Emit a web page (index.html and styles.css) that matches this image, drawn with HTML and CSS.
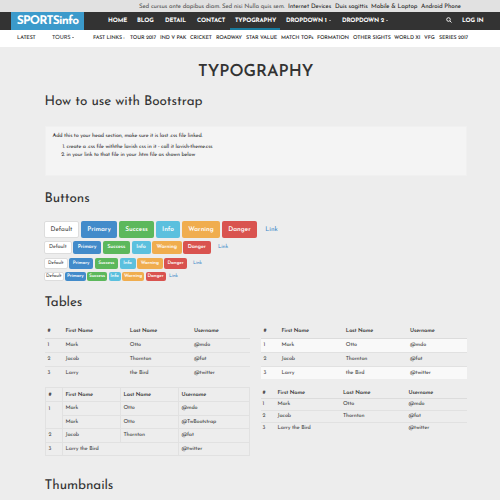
FILE: index.html
```
<!DOCTYPE html>
<html lang="en">
<head>
<meta charset="utf-8">
<title>SPORTSinfo - Typography</title>
<link rel="stylesheet" href="styles.css">
</head>
<body>
<div class="topbar"><span class="tagline">Sed cursus ante dapibus diam. Sed nisi Nulla quis sem.</span><a>Internet Devices</a><a>Duis sagittis</a><a>Mobile &amp; Laptop</a><a>Android Phone</a></div>
<nav class="navbar">
  <a class="brand">SPORTSinfo</a>
  <div class="menu"><a>HOME</a><a>BLOG</a><a>DETAIL</a><a>CONTACT</a><a class="active">TYPOGRAPHY</a><a>DROPDOWN 1<i class="caret"></i></a><a>DROPDOWN 2<i class="caret"></i></a><a><svg class="search" viewBox="0 0 12 12"><circle cx="5" cy="5" r="3.6"/><path d="M8 8l3 3"/></svg></a><a>LOG IN</a></div>
</nav>
<div class="subnav"><b>LATEST</b><span class="tours">TOURS<i class="caret"></i></span><b>FAST LINKS :</b><a>TOUR 2017</a><a>IND V PAK</a><a>CRICKET</a><a>ROADWAY</a><a>STAR VALUE</a><a>MATCH TOPs</a><a>FORMATION</a><a>OTHER SIGHTS</a><a>WORLD XI</a><a>VFG</a><a>SERIES 2017</a></div>
<main>
  <h1>TYPOGRAPHY</h1>
  <h2 class="how">How to use with Bootstrap</h2>
  <section class="well">
    <p>Add this to your head section, make sure it is last .css file linked.</p>
    <ol><li>create a .css file withthe lavish css in it - call it lavish-theme.css</li><li>in your link to that file in your .htm file as shown below</li></ol>
  </section>
  <h2 class="buttons-title">Buttons</h2>
  <div class="buttons lg"><a class="default">Default</a><a class="primary">Primary</a><a class="success">Success</a><a class="info">Info</a><a class="warning">Warning</a><a class="danger">Danger</a><a class="link">Link</a></div>
  <div class="buttons md"><a class="default">Default</a><a class="primary">Primary</a><a class="success">Success</a><a class="info">Info</a><a class="warning">Warning</a><a class="danger">Danger</a><a class="link">Link</a></div>
  <div class="buttons sm"><a class="default">Default</a><a class="primary">Primary</a><a class="success">Success</a><a class="info">Info</a><a class="warning">Warning</a><a class="danger">Danger</a><a class="link">Link</a></div>
  <div class="buttons xs"><a class="default">Default</a><a class="primary">Primary</a><a class="success">Success</a><a class="info">Info</a><a class="warning">Warning</a><a class="danger">Danger</a><a class="link">Link</a></div>
  <h2 class="tables-title">Tables</h2>
  <div class="tables">
    <div class="column">
      <table class="plain">
        <colgroup><col class="c1"><col class="c2"><col class="c3"><col></colgroup>
        <thead><tr><th>#</th><th>First Name</th><th>Last Name</th><th>Username</th></tr></thead>
        <tbody><tr><td>1</td><td>Mark</td><td>Otto</td><td>@mdo</td></tr><tr><td>2</td><td>Jacob</td><td>Thornton</td><td>@fat</td></tr><tr><td>3</td><td>Larry</td><td>the Bird</td><td>@twitter</td></tr></tbody>
      </table>
      <table class="bordered">
        <colgroup><col class="c1"><col class="c2"><col class="c3"><col></colgroup>
        <thead><tr><th>#</th><th>First Name</th><th>Last Name</th><th>Username</th></tr></thead>
        <tbody><tr><td rowspan="2" class="top">1</td><td>Mark</td><td>Otto</td><td>@mdo</td></tr><tr><td>Mark</td><td>Otto</td><td>@TwBootstrap</td></tr><tr><td>2</td><td>Jacob</td><td>Thornton</td><td>@fat</td></tr><tr><td>3</td><td colspan="2">Larry the Bird</td><td>@twitter</td></tr></tbody>
      </table>
    </div>
    <div class="column">
      <table class="plain striped">
        <colgroup><col class="c1"><col class="c2"><col class="c3"><col></colgroup>
        <thead><tr><th>#</th><th>First Name</th><th>Last Name</th><th>Username</th></tr></thead>
        <tbody><tr><td>1</td><td>Mark</td><td>Otto</td><td>@mdo</td></tr><tr><td>2</td><td>Jacob</td><td>Thornton</td><td>@fat</td></tr><tr><td>3</td><td>Larry</td><td>the Bird</td><td>@twitter</td></tr></tbody>
      </table>
      <table class="condensed">
        <colgroup><col class="c1"><col class="c2"><col class="c3"><col></colgroup>
        <thead><tr><th>#</th><th>First Name</th><th>Last Name</th><th>Username</th></tr></thead>
        <tbody><tr><td>1</td><td>Mark</td><td>Otto</td><td>@mdo</td></tr><tr><td>2</td><td>Jacob</td><td>Thornton</td><td>@fat</td></tr><tr><td>3</td><td colspan="2">Larry the Bird</td><td>@twitter</td></tr></tbody>
      </table>
    </div>
  </div>
  <h2 class="thumbs-title">Thumbnails</h2>
</main>
</body>
</html>
```
FILE: styles.css
```
* { box-sizing: border-box; }
body { margin: 0; width: 500px; height: 500px; overflow: hidden; background: #ededed; color: #333; font-family: "Josefin Sans", Lato, sans-serif; font-size: 5.5px; letter-spacing: -.12px; text-rendering: geometricPrecision; }
a, span, b, th, td { white-space: nowrap; }
.topbar { display: grid; grid-template-columns: 149px 47px 36px 50px 45px; padding-left: 139px; height: 12px; line-height: 13px; background: #e1e1e1; font-size: 6.2px; letter-spacing: -.11px; color: #222; }
.tagline { color: #555; letter-spacing: -.13px; }
.navbar { display: flex; height: 18px; padding-left: 11px; background: #333; color: #fff; }
.brand { width: 73px; background: #3b9acb; font-size: 12px; font-weight: 700; letter-spacing: -.75px; line-height: 19px; text-align: center; }
.menu { display: grid; grid-template-columns: 29px 28px 32px 38px 51px 56px 104px 16px 30px; padding-left: 24px; font-size: 6px; font-weight: 700; letter-spacing: -.15px; line-height: 18px; }
.menu .active { margin-left: -5px; padding-left: 5px; width: 50px; box-shadow: inset 0 -2px #197a9c; }
.caret { display: inline-block; margin-left: 2px; border: 1.5px solid transparent; border-top-color: currentColor; border-bottom: 0; vertical-align: 1px; }
.search { width: 6px; height: 6px; vertical-align: -1px; fill: none; stroke: #fff; stroke-width: 1.8; }
.subnav { display: grid; grid-template-columns: 35px 41px 37px 30px 30px 26px 30px 35px 36px 36px 41px 30px 15px 33px; height: 17px; padding-left: 17px; line-height: 18px; background: #fff; font-size: 5.3px; font-weight: 600; letter-spacing: -.15px; }
.subnav b { font-weight: 600; }
.tours { font-weight: 400; font-size: 5.7px; }
main { padding: 0 33px 0 44.5px; }
h1, h2, p, ol { margin: 0; }
h1 { height: 45px; padding-top: 16px; line-height: 20px; font-size: 16.5px; font-weight: 600; letter-spacing: 0; text-align: center; }
h2 { font-size: 13.5px; letter-spacing: -.08px; font-weight: 400; line-height: 22px; }
.how { height: 34px; }
.well { height: 50px; padding: 6px 7px; background: #f4f4f4; border: 1px solid #f0f0f0; line-height: 7.9px; }
.well ol { margin-top: 3px; padding-left: 14px; }
.buttons-title { height: 45px; padding-top: 13px; }
.buttons { display: flex; margin-left: -.5px; color: #fff; font-weight: 600; letter-spacing: 0; }
.buttons a { display: flex; align-items: center; justify-content: center; border-radius: 2px; }
.buttons .default { background: #fff; color: #444; font-weight: 400; border: 1px solid #ddd; }
.primary { background: #428bca; }
.success { background: #5cb85c; }
.info { background: #5bc0de; }
.warning { background: #f0ad4e; }
.danger { background: #d9534f; }
.buttons .link { color: #428bca; font-weight: 400; }
.lg { height: 17px; gap: 2px; font-size: 6.5px; margin-bottom: 3px; }
.lg .default { width: 35px; } .lg .primary { width: 36px; } .lg .success { width: 35px; } .lg .info { width: 24px; } .lg .warning { width: 38px; } .lg .danger { width: 35px; } .lg .link { width: 25px; }
.buttons.md { height: 13px; gap: 1.5px; font-size: 5.4px; letter-spacing: -.1px; margin-bottom: 3.5px; }
.md .default { width: 27.5px; } .md .primary { width: 28px; } .md .success { width: 27.5px; } .md .info { width: 19px; } .md .warning { width: 29.5px; } .md .danger { width: 27.5px; } .md .link { width: 22px; }
.buttons.sm { height: 11.5px; gap: 1.5px; font-size: 4.8px; letter-spacing: -.1px; margin-bottom: 3px; }
.sm .default { width: 23.5px; } .sm .primary { width: 24px; } .sm .success { width: 23.5px; } .sm .info { width: 16px; } .sm .warning { width: 25.5px; } .sm .danger { width: 23px; } .sm .link { width: 18px; }
.buttons.xs { height: 8.5px; gap: 1.5px; font-size: 4.8px; letter-spacing: -.1px; }
.xs .default { width: 19.5px; } .xs .primary { width: 20.5px; } .xs .success { width: 20px; } .xs .info { width: 12px; } .xs .warning { width: 22px; } .xs .danger { width: 20px; } .xs .link { width: 13px; }
.tables-title { height: 44.5px; padding-top: 12px; }
.tables { display: grid; grid-template-columns: 205px 206px; gap: 11px; height: 144px; }
table { width: 100%; table-layout: fixed; border-collapse: separate; border-spacing: 0; }
th, td { height: 13.6px; padding: 1px 0 0 3px; line-height: 7px; text-align: left; vertical-align: middle; }
th { font-weight: 600; }
thead th { border-bottom: 1px solid #dcdcdc; }
td { color: #444; }
.plain .c1 { width: 18px; } .plain .c2, .plain .c3 { width: 64.3px; }
.plain { margin-bottom: 8px; }
.plain tbody tr + tr td, .condensed tbody tr + tr td { border-top: 1px solid #e1e1e1; }
.striped tbody tr:nth-child(odd) td { background: #f9f9f9; }
.bordered { border: solid #e1e1e1; border-width: 1px 0 0 1px; }
.bordered th, .bordered td { border: solid #e1e1e1; border-width: 0 1px 1px 0; }
.bordered .top { vertical-align: top; padding-top: 4px; }
.bordered .c1 { width: 17px; } .bordered .c2, .bordered .c3 { width: 58px; }
.condensed th, .condensed td { height: 11.4px; padding-left: 2px; }
.condensed .c1 { width: 15px; } .condensed .c2, .condensed .c3 { width: 65.5px; }
.thumbs-title { padding-top: 7px; }
```
